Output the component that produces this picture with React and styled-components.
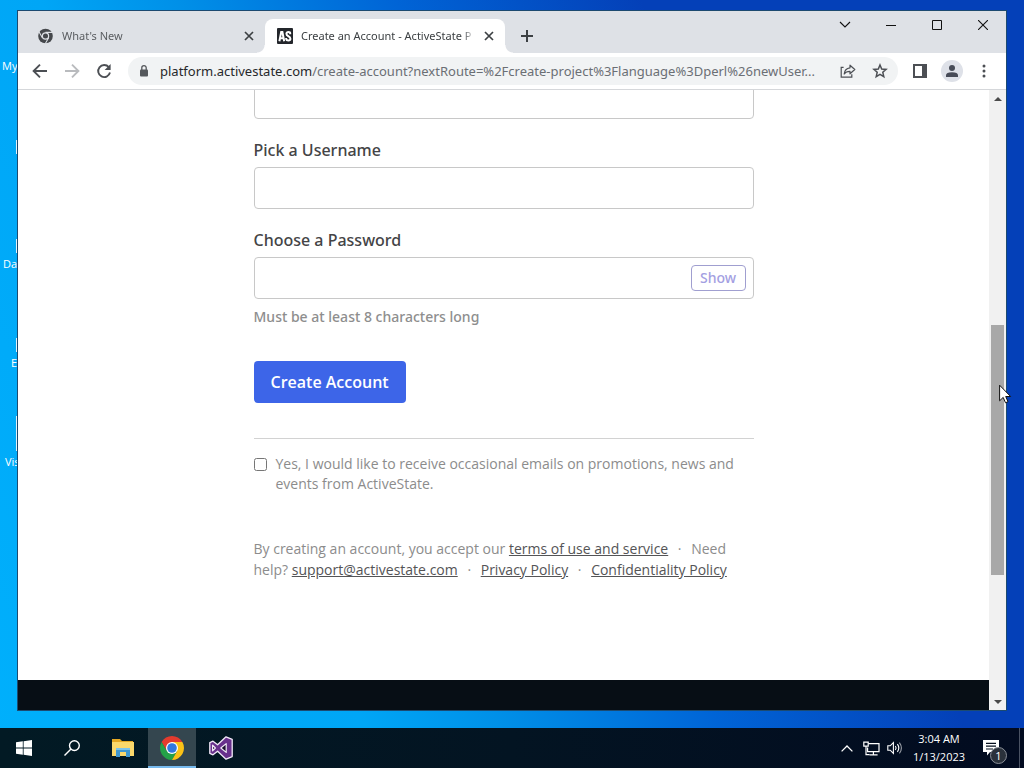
import React from "react";
import styled, { createGlobalStyle } from "styled-components";

const GlobalStyle = createGlobalStyle`
  * { box-sizing: border-box; }
  body { margin: 0; font-family: "Open Sans", "Noto Sans", sans-serif; }
  button { font-family: inherit; padding: 0; border: 0; background: none; cursor: pointer; }
  svg { display: block; flex: none; }
`;

/* ---------- Desktop ---------- */

const Desktop = styled.div`
  display: flex;
  flex-direction: column;
  height: 100vh;
  min-height: 640px;
  overflow: hidden;
  background: linear-gradient(66deg, #00b0fc 0%, #00a6f6 28%, #0090e8 38%, #0064d6 54%, #0440b8 72%);
`;

const Workspace = styled.div`
  position: relative;
  flex: 1;
  min-height: 0;
  display: flex;
  padding: 11px 18px 18px;
`;

const Shortcuts = styled.ul`
  position: absolute;
  top: 56px;
  left: 0;
  width: 18px;
  margin: 0;
  padding: 0;
  list-style: none;
  overflow: hidden;
`;

const Shortcut = styled.li`
  display: flex;
  flex-direction: column;
  justify-content: space-between;
  height: 99px;
  padding-left: ${(p) => p.$inset}px;
  font-size: 11px;
  line-height: 20px;
  color: #fff;
  white-space: nowrap;
`;

const IconEdge = styled.span`
  align-self: flex-end;
  width: 2px;
  height: ${(p) => p.$height}px;
  margin-bottom: 1px;
  background: #e4f2fa;
`;

/* ---------- Browser window ---------- */

const Window = styled.main`
  position: relative;
  flex: 1;
  min-width: 0;
  display: flex;
  flex-direction: column;
  background: #fff;
  box-shadow: 0 0 0 1px #1c4a70;
`;

const TabStrip = styled.div`
  display: flex;
  align-items: flex-end;
  height: 42px;
  padding-left: 7px;
  background: #dee1e6;
`;

const Tab = styled.div`
  position: relative;
  display: flex;
  align-items: center;
  gap: 8px;
  width: 240px;
  height: 34px;
  padding: 0 8px 0 12px;
  border-radius: 8px 8px 0 0;
  background: ${(p) => (p.$active ? "#fff" : "transparent")};
  color: ${(p) => (p.$active ? "#3c4043" : "#5a5d61")};

  &::before,
  &::after {
    content: "";
    display: ${(p) => (p.$active ? "block" : "none")};
    position: absolute;
    bottom: 0;
    width: 8px;
    height: 8px;
  }
  &::before {
    left: -8px;
    background: radial-gradient(circle at 0 0, transparent 7px, #fff 8px);
  }
  &::after {
    right: -8px;
    background: radial-gradient(circle at 100% 0, transparent 7px, #fff 8px);
  }
`;

const TabTitle = styled.span`
  flex: 1;
  min-width: 0;
  overflow: hidden;
  white-space: nowrap;
  font-family: "Noto Sans", "Open Sans", sans-serif;
  font-size: 11px;
  line-height: 18px;
  mask-image: linear-gradient(to right, #000 94%, transparent 101%);
`;

const TabButton = styled.button`
  display: grid;
  place-items: center;
  width: 16px;
  height: 16px;
  color: #3c4043;
`;

const NewTab = styled.button`
  display: grid;
  place-items: center;
  width: 28px;
  height: 28px;
  margin: 0 0 3px 8px;
  color: #3c4043;
`;

const WindowControls = styled.div`
  display: flex;
  align-self: flex-start;
  margin-left: auto;
`;

const WindowButton = styled.button`
  display: grid;
  place-items: center;
  width: 46px;
  height: 28px;
  color: #111;
`;

const Toolbar = styled.div`
  display: flex;
  align-items: center;
  height: 37px;
  padding: 0 6px;
  border-bottom: 1px solid #d5d7da;
`;

const ToolButton = styled.button`
  display: grid;
  place-items: center;
  width: 32px;
  height: 28px;
  color: ${(p) => (p.disabled ? "#b9bbbe" : "#4c4f54")};
`;

const AddressBar = styled.div`
  flex: 1;
  min-width: 0;
  display: flex;
  align-items: center;
  height: 28px;
  margin: 0 6px 0 8px;
  padding-right: 2px;
  border-radius: 14px;
  background: #f1f3f4;
`;

const Address = styled.div`
  flex: 1;
  min-width: 0;
  overflow: hidden;
  white-space: nowrap;
  font-family: "Noto Sans", "Open Sans", sans-serif;
  font-size: 13px;
  line-height: 20px;
  color: #6b6f74;
`;

const Host = styled.span`
  color: #26282b;
`;

const Avatar = styled.span`
  display: grid;
  place-items: center;
  width: 22px;
  height: 22px;
  border-radius: 50%;
  background: #dee1e8;
`;

const Viewport = styled.div`
  flex: 1;
  min-height: 0;
  display: flex;
`;

const Page = styled.div`
  flex: 1;
  min-width: 0;
  display: flex;
  flex-direction: column;
  overflow: hidden;
`;

const PageFooter = styled.footer`
  flex: none;
  height: 30px;
  margin-top: auto;
  background: #070e15;
`;

/* ---------- Sign-up form ---------- */

const Form = styled.form`
  width: 100%;
  max-width: 500px;
  margin: -13px auto 0;
  font-family: "Noto Sans", "Open Sans", sans-serif;
`;

const Field = styled.div`
  display: flex;
  flex-direction: column;
  margin-bottom: 20px;
`;

const Label = styled.label`
  margin-bottom: 6px;
  font-size: 16px;
  font-weight: 500;
  line-height: 22px;
  color: #444446;
`;

const InputBox = styled.div`
  display: flex;
  align-items: center;
  height: 42px;
  padding-right: 7px;
  border: 1px solid #c8c8c8;
  border-radius: 4px;
`;

const Input = styled.input`
  flex: 1;
  min-width: 0;
  height: 100%;
  padding: 0 12px;
  border: 0;
  outline: 0;
  background: none;
  font: 16px "Open Sans", sans-serif;
`;

const ShowButton = styled.button`
  width: 55px;
  height: 26px;
  border: 1px solid #a09fd0;
  border-radius: 4px;
  font-size: 14px;
  font-weight: 500;
  line-height: 20px;
  color: #a3a0e2;
`;

const Hint = styled.p`
  margin: 8px 0 0;
  font-size: 14px;
  font-weight: 500;
  line-height: 20px;
  color: #8e8e8e;
`;

const SubmitButton = styled.button`
  height: 42px;
  margin-top: 14px;
  padding: 0 17px;
  border-radius: 4px;
  background: #3d65e8;
  font-family: "Open Sans", sans-serif;
  font-size: 16px;
  font-weight: 600;
  color: #fff;
`;

const Divider = styled.hr`
  height: 1px;
  margin: 35px 0 15px;
  border: 0;
  background: #d2d2d2;
`;

const OptIn = styled.label`
  display: flex;
  align-items: flex-start;
  gap: 9px;
  font-family: "Open Sans", "Noto Sans", sans-serif;
  font-size: 14px;
  line-height: 20px;
  color: #8c8c8c;
`;

const Checkbox = styled.input`
  flex: none;
  width: 13px;
  height: 13px;
  margin: 4px 0 0;
`;

const Legal = styled.p`
  margin: 44px 0 0;
  font-family: "Open Sans", "Noto Sans", sans-serif;
  font-size: 14px;
  line-height: 21px;
  color: #8c8c8c;
`;

const Link = styled.a`
  color: #545456;
  text-decoration: underline;
`;

const Dot = styled.span`
  margin: 0 6px;
`;

/* ---------- Scroll bar ---------- */

const ScrollBar = styled.div`
  display: flex;
  flex-direction: column;
  width: 17px;
  background: #f1f1f1;
`;

const ScrollArrow = styled.button`
  display: grid;
  place-items: center;
  width: 17px;
  height: 17px;
  color: #4a4a4a;
`;

const Track = styled.div`
  flex: 1;
  display: grid;
  grid-template-rows: 218fr 250fr 118fr;
`;

const Thumb = styled.div`
  position: relative;
  grid-row: 2;
  margin: 0 2px;
  background: #a8a8a8;
`;

const Pointer = styled.svg`
  position: absolute;
  top: 59px;
  left: 8px;
  z-index: 2;
`;

/* ---------- Taskbar ---------- */

const Taskbar = styled.footer`
  display: flex;
  height: 40px;
  background: linear-gradient(90deg, #021a24 0%, #031422 50%, #020b20 100%);
  color: #fff;
`;

const TaskGroup = styled.div`
  display: flex;
  gap: ${(p) => p.$gap || 0}px;
  margin-right: 3px;
`;

const TaskButton = styled.button`
  display: grid;
  place-items: center;
  width: 48px;
  height: 40px;
  color: #fff;
  background: ${(p) => (p.$active ? "#34464f" : "none")};
  box-shadow: ${(p) => (p.$active ? "inset 0 -2px #76b9ed" : "none")};
`;

const Tray = styled.div`
  display: flex;
  align-items: center;
  margin-left: auto;
`;

const TrayButton = styled.button`
  display: grid;
  place-items: center;
  width: 24px;
  height: 40px;
  color: #fff;
`;

const Clock = styled.time`
  width: 64px;
  text-align: center;
  font-size: 11px;
  line-height: 18px;
`;

const NoticeButton = styled.button`
  position: relative;
  display: grid;
  place-items: center;
  width: 48px;
  height: 40px;
  padding-right: 8px;
  color: #fff;
`;

const Badge = styled.span`
  position: absolute;
  right: 12px;
  bottom: 4px;
  width: 17px;
  height: 17px;
  border: 1px solid #8a8f98;
  border-radius: 50%;
  background: #2a313b;
  font-size: 11px;
  line-height: 15px;
  text-align: center;
`;

const PeekButton = styled.button`
  width: 5px;
  height: 40px;
  border-left: 1px solid #4a5263;
`;

/* ---------- Icons ---------- */

const ChromeIcon = () => (
  <svg width="24" height="24" viewBox="0 0 24 24">
    <path fill="#e33b2e" d="M12 12V6h10.39A12 12 0 0 0 1.61 6L6.8 15z" />
    <path fill="#24a148" d="M12 12L6.8 15 1.61 6A12 12 0 0 0 12 24l5.2-9z" />
    <path fill="#fbc116" d="M12 12l5.2 3L12 24A12 12 0 0 0 22.39 6H12z" />
    <circle cx="12" cy="12" r="6" fill="#fff" />
    <circle cx="12" cy="12" r="4.8" fill="#3178e0" />
  </svg>
);

const ChromeMonoIcon = () => (
  <svg width="17" height="16" viewBox="0 0 24 24">
    <circle cx="12" cy="12" r="11" fill="#45484c" />
    <circle cx="12" cy="12" r="5.6" fill="#dee1e6" />
    <circle cx="12" cy="12" r="3.8" fill="#45484c" />
    <path stroke="#dee1e6" strokeWidth="1.6" d="M12 6.6h11M7.3 14.7L2 5.4M16.7 14.7L11.6 23.6" />
  </svg>
);

const ActiveStateIcon = () => (
  <svg width="16" height="16" viewBox="0 0 16 16">
    <rect width="16" height="16" rx="1" fill="#23262b" />
    <g fill="none" stroke="#fff" strokeWidth="2">
      <path d="M2.4 13.2L4.2 4h1.2l1.8 9.2M3.4 10.2h3" />
      <path d="M13.2 6.2V5.4Q13.2 4 11.4 4T9.4 5.8Q9.4 7.4 11.4 8.2T13.4 10.8Q13.4 12.4 11.4 12.4T9.2 11V10" />
    </g>
  </svg>
);

const CloseIcon = () => (
  <svg width="10" height="10" viewBox="0 0 10 10">
    <path stroke="currentColor" strokeWidth="1.7" d="M1 1l8 8M9 1L1 9" />
  </svg>
);

const LockIcon = () => (
  <svg width="32" height="16" viewBox="0 0 32 16">
    <rect x="12" y="6.4" width="8" height="7" rx="1" fill="#55585c" />
    <path d="M13.8 7V4.8a2.2 2.2 0 0 1 4.4 0V7" fill="none" stroke="#55585c" strokeWidth="1.3" />
  </svg>
);

const ArrowIcon = ({ forward }) => (
  <svg width="16" height="16" viewBox="0 0 16 16" fill="none" stroke="currentColor" strokeWidth="1.9">
    <path d={forward ? "M1 8h13M8 1.6L14.4 8 8 14.4" : "M15 8H2M8 1.6L1.6 8 8 14.4"} />
  </svg>
);

const ReloadIcon = () => (
  <svg width="16" height="16" viewBox="0 0 16 16">
    <path d="M12.8 4.2A6 6 0 1 0 14 9.6" fill="none" stroke="currentColor" strokeWidth="1.9" />
    <path d="M14.6 1v6H8.6z" fill="currentColor" />
  </svg>
);

const ShareIcon = () => (
  <svg width="16" height="16" viewBox="0 0 16 16" fill="none" stroke="currentColor" strokeWidth="1.2">
    <path d="M3.6 4.4H1.2v9.8h10.6v-3" />
    <path d="M10 2.2l4.8 4.3L10 10.8V8.4c-2.9 0-4.6.8-5.8 2.6.3-3.4 2-5.8 5.8-6.2z" strokeLinejoin="round" />
  </svg>
);

const StarIcon = () => (
  <svg width="16" height="16" viewBox="0 0 16 16" fill="none" stroke="currentColor" strokeWidth="1.5">
    <path d="M8 2l1.7 4 4.4.4-3.3 2.9 1 4.3L8 11.3l-3.8 2.3 1-4.3L1.9 6.4 6.3 6z" />
  </svg>
);

const PanelIcon = () => (
  <svg width="14" height="14" viewBox="0 0 14 14">
    <path fill="currentColor" fillRule="evenodd" d="M0 0h14v14H0zM2 2v10h7V2z" />
  </svg>
);

const PersonIcon = () => (
  <svg width="12" height="12" viewBox="0 0 12 12" fill="#474b57">
    <circle cx="6" cy="3" r="3" />
    <path d="M0 12v-1.8Q0 7.2 6 7.2t6 3V12z" />
  </svg>
);

const MenuIcon = () => (
  <svg width="4" height="14" viewBox="0 0 4 14" fill="currentColor">
    <circle cx="2" cy="2" r="1.5" />
    <circle cx="2" cy="7" r="1.5" />
    <circle cx="2" cy="12" r="1.5" />
  </svg>
);

const WindowsIcon = () => (
  <svg width="16" height="16" viewBox="0 0 16 16" fill="#fff">
    <path d="M0 2.3l6.8-1v6.3H0zM7.6 1.2L16 0v7.6H7.6zM0 8.4h6.8v6.3l-6.8-1zM7.6 8.4H16V16l-8.4-1.2z" />
  </svg>
);

const SearchIcon = () => (
  <svg width="16" height="16" viewBox="0 0 16 16" fill="none" stroke="#fff" strokeWidth="1.4">
    <circle cx="10.4" cy="5.6" r="4.9" />
    <path d="M7 9L.5 15.5" />
  </svg>
);

const FolderIcon = () => (
  <svg width="22" height="18" viewBox="0 0 22 18">
    <path fill="#e5a823" d="M0 0h8l2 2h11v5H0z" />
    <path fill="#fbd86b" d="M0 3h22v14H0z" />
    <path fill="#3f97cf" d="M4 9h14v9h-4v-5H8v5H4z" />
    <path fill="#7cc3ea" d="M4 9h14v2H4z" />
  </svg>
);

const VisualStudioIcon = () => (
  <svg width="24" height="24" viewBox="0 0 24 24" strokeLinejoin="round">
    <path
      fill="#68308c"
      stroke="#f2eaf8"
      strokeWidth="1.3"
      d="M17 .8l6.2 2.6v17.2L17 23.2l-8.4-8-4.6 3.6L.8 17.4V6.6L4 5.2l4.6 3.6z"
    />
    <path fill="#1c1230" stroke="#f2eaf8" strokeWidth="1.2" d="M17.2 7.6v8.8L11.8 12zM3.6 9.2v5.6L6.4 12z" />
  </svg>
);

const NetworkIcon = () => (
  <svg width="17" height="15" viewBox="0 0 17 15" fill="none" stroke="#fff" strokeWidth="1.2">
    <path d="M5.5 2.6H16v8H4.6V6.4M10.4 10.6v3M6.6 13.8h8" />
    <path d="M.8 1.2h4.4v4H.8zM3 5.2v8.4h3.6" />
  </svg>
);

const SpeakerIcon = () => (
  <svg width="16" height="14" viewBox="0 0 16 14" fill="none" stroke="#fff" strokeWidth="1.1">
    <path d="M.8 4.8h2.4L6.4 1.6v10.8L3.2 9.2H.8z" />
    <path d="M8.4 5q1.4 2 0 4M10.4 3.2q2.8 3.8 0 7.6" />
    <path d="M12.4 1.6q4 5.4 0 10.8" opacity=".6" />
  </svg>
);

const NoticeIcon = () => (
  <svg width="16" height="16" viewBox="0 0 16 16">
    <path fill="#fff" d="M0 0h16v12H7l-3 3.6V12H0z" />
    <path stroke="#07101f" strokeWidth="1.2" d="M3 3.4h10M3 6.2h10M3 9h7" />
  </svg>
);

const shortcuts = [
  { name: "My", inset: 2, edge: 14 },
  { name: "", inset: 2, edge: 14 },
  { name: "Da", inset: 3, edge: 14 },
  { name: "E", inset: 11, edge: 35 },
  { name: "Vis", inset: 5, edge: 0 },
];

export default function App() {
  return (
    <Desktop>
      <GlobalStyle />
      <Workspace>
        <Shortcuts>
          {shortcuts.map((s, i) => (
            <Shortcut key={i} $inset={s.inset}>
              <span>{s.name}</span>
              <IconEdge $height={s.edge} />
            </Shortcut>
          ))}
        </Shortcuts>
        <Window>
          <TabStrip>
            <Tab>
              <ChromeMonoIcon />
              <TabTitle>What's New</TabTitle>
              <TabButton aria-label="Close tab"><CloseIcon /></TabButton>
            </Tab>
            <Tab $active>
              <ActiveStateIcon />
              <TabTitle>Create an Account - ActiveState P</TabTitle>
              <TabButton aria-label="Close tab"><CloseIcon /></TabButton>
            </Tab>
            <NewTab aria-label="New tab">
              <svg width="12" height="12" viewBox="0 0 12 12">
                <path stroke="currentColor" strokeWidth="2" d="M6 0v12M0 6h12" />
              </svg>
            </NewTab>
            <WindowControls>
              <WindowButton aria-label="Search tabs">
                <svg width="12" height="8" viewBox="0 0 12 8">
                  <path d="M1 1l5 5 5-5" fill="none" stroke="currentColor" strokeWidth="1.1" />
                </svg>
              </WindowButton>
              <WindowButton aria-label="Minimize">
                <svg width="10" height="2" viewBox="0 0 10 2"><path fill="currentColor" d="M0 1h10v1H0z" /></svg>
              </WindowButton>
              <WindowButton aria-label="Maximize">
                <svg width="10" height="10" viewBox="0 0 10 10">
                  <path d="M.5.5h9v9h-9z" fill="none" stroke="currentColor" />
                </svg>
              </WindowButton>
              <WindowButton aria-label="Close">
                <svg width="10" height="10" viewBox="0 0 10 10">
                  <path stroke="currentColor" strokeWidth="1.1" d="M0 0l10 10M10 0L0 10" />
                </svg>
              </WindowButton>
            </WindowControls>
          </TabStrip>

          <Toolbar>
            <ToolButton aria-label="Back"><ArrowIcon /></ToolButton>
            <ToolButton aria-label="Forward" disabled><ArrowIcon forward /></ToolButton>
            <ToolButton aria-label="Reload"><ReloadIcon /></ToolButton>
            <AddressBar>
              <LockIcon />
              <Address role="textbox" aria-label="Address">
                <Host>platform.activestate.com</Host>
                /create-account?nextRoute=%2Fcreate-project%3Flanguage%3Dperl%26newUser...
              </Address>
              <ToolButton aria-label="Share"><ShareIcon /></ToolButton>
              <ToolButton aria-label="Bookmark"><StarIcon /></ToolButton>
            </AddressBar>
            <ToolButton aria-label="Side panel"><PanelIcon /></ToolButton>
            <ToolButton aria-label="Profile"><Avatar><PersonIcon /></Avatar></ToolButton>
            <ToolButton aria-label="Menu"><MenuIcon /></ToolButton>
          </Toolbar>

          <Viewport>
            <Page>
              <Form onSubmit={(e) => e.preventDefault()}>
                <Field>
                  <InputBox><Input type="email" aria-label="Email" /></InputBox>
                </Field>
                <Field>
                  <Label htmlFor="username">Pick a Username</Label>
                  <InputBox><Input id="username" type="text" /></InputBox>
                </Field>
                <Field>
                  <Label htmlFor="password">Choose a Password</Label>
                  <InputBox>
                    <Input id="password" type="password" />
                    <ShowButton type="button">Show</ShowButton>
                  </InputBox>
                  <Hint>Must be at least 8 characters long</Hint>
                </Field>
                <SubmitButton type="submit">Create Account</SubmitButton>
                <Divider />
                <OptIn>
                  <Checkbox type="checkbox" />
                  <span>
                    Yes, I would like to receive occasional emails on promotions, news and events from ActiveState.
                  </span>
                </OptIn>
                <Legal>
                  By creating an account, you accept our <Link href="#terms">terms of use and service</Link>{" "}
                  <Dot>·</Dot> Need help? <Link href="#support">support@activestate.com</Link> <Dot>·</Dot>{" "}
                  <Link href="#privacy">Privacy Policy</Link> <Dot>·</Dot>{" "}
                  <Link href="#confidentiality">Confidentiality Policy</Link>
                </Legal>
              </Form>
              <PageFooter />
            </Page>
            <ScrollBar>
              <ScrollArrow aria-label="Scroll up">
                <svg width="8" height="4" viewBox="0 0 8 4"><path fill="currentColor" d="M0 4l4-4 4 4z" /></svg>
              </ScrollArrow>
              <Track>
                <Thumb>
                  <Pointer width="13" height="20" viewBox="0 0 13 20">
                    <path
                      fill="#fff"
                      stroke="#111"
                      d="M.6 1.2v15.6l3.6-3.4 2.3 5.4 2.5-1.1-2.3-5.2h4.9z"
                    />
                  </Pointer>
                </Thumb>
              </Track>
              <ScrollArrow aria-label="Scroll down">
                <svg width="8" height="4" viewBox="0 0 8 4"><path fill="currentColor" d="M0 0l4 4 4-4z" /></svg>
              </ScrollArrow>
            </ScrollBar>
          </Viewport>
        </Window>
      </Workspace>

      <Taskbar>
        <TaskGroup>
          <TaskButton aria-label="Start"><WindowsIcon /></TaskButton>
          <TaskButton aria-label="Search"><SearchIcon /></TaskButton>
        </TaskGroup>
        <TaskGroup $gap={1}>
          <TaskButton aria-label="File Explorer"><FolderIcon /></TaskButton>
          <TaskButton aria-label="Chrome" $active><ChromeIcon /></TaskButton>
          <TaskButton aria-label="Visual Studio"><VisualStudioIcon /></TaskButton>
        </TaskGroup>
        <Tray>
          <TrayButton aria-label="Hidden icons">
            <svg width="12" height="7" viewBox="0 0 12 7">
              <path d="M.6 6.4L6 1l5.4 5.4" fill="none" stroke="#fff" strokeWidth="1.3" />
            </svg>
          </TrayButton>
          <TrayButton aria-label="Network"><NetworkIcon /></TrayButton>
          <TrayButton aria-label="Volume"><SpeakerIcon /></TrayButton>
          <Clock>3:04 AM<br />1/13/2023</Clock>
          <NoticeButton aria-label="Notifications">
            <NoticeIcon />
            <Badge>1</Badge>
          </NoticeButton>
          <PeekButton aria-label="Show desktop" />
        </Tray>
      </Taskbar>
    </Desktop>
  );
}
